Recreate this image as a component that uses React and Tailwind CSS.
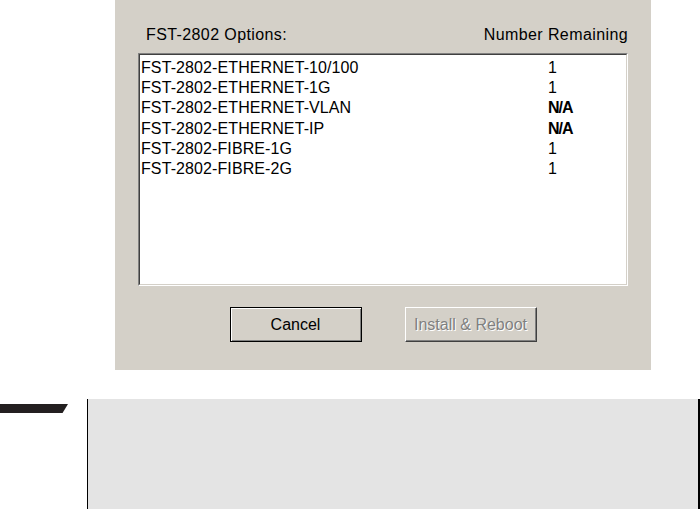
import React from 'react';

const options = [
  { name: 'FST-2802-ETHERNET-10/100', left: '1' },
  { name: 'FST-2802-ETHERNET-1G', left: '1' },
  { name: 'FST-2802-ETHERNET-VLAN', left: 'N/A' },
  { name: 'FST-2802-ETHERNET-IP', left: 'N/A' },
  { name: 'FST-2802-FIBRE-1G', left: '1' },
  { name: 'FST-2802-FIBRE-2G', left: '1' },
];

const App = () => {
  return (
    <div className="w-[700px] h-[509px] bg-white overflow-hidden font-['Liberation_Sans',Arial,sans-serif] text-black">
      {/* dialog panel */}
      <div className="ml-[115px] w-[536px] h-[370px] bg-[#d4d0c8] pt-[25px] pl-[23px]">
        <div className="w-[490px] h-[20px] flex items-center justify-between text-[16px] tracking-[0.4px] leading-none">
          <span className="pl-[8px]">FST-2802 Options:</span>
          <span>Number Remaining</span>
        </div>

        <div className="mt-[8px] w-[490px] h-[233px] border border-t-[#808080] border-l-[#808080] border-b-white border-r-white">
          <div className="h-full bg-white border border-t-[#404040] border-l-[#404040] border-b-[#d4d0c8] border-r-[#d4d0c8] pt-[3px] pl-[1px]">
            {options.map((o) => (
              <div key={o.name} className="flex h-[20.2px] items-center text-[16px] tracking-[0.1px] leading-none">
                <span className="w-[407px] shrink-0">{o.name}</span>
                <span className={o.left === 'N/A' ? 'font-bold tracking-[-1px]' : ''}>{o.left}</span>
              </div>
            ))}
          </div>
        </div>

        <div className="mt-[21px] w-[490px] flex justify-center gap-[43px]">
          <button className="w-[132px] h-[35px] border border-black bg-[#d4d0c8] shadow-[inset_1px_1px_0_#fff,inset_-1px_-1px_0_#808080] text-[16px] font-normal">
            Cancel
          </button>
          <button
            disabled
            className="w-[132px] h-[35px] border border-t-white border-l-white border-r-[#404040] border-b-[#404040] bg-[#d4d0c8] shadow-[inset_-1px_-1px_0_#808080] text-[16px] font-normal text-[#808080] [text-shadow:1px_1px_0_#fff]"
          >
            Install &amp; Reboot
          </button>
        </div>
      </div>

      {/* note box below */}
      <div className="mt-[29px] flex h-[110px]">
        <div className="w-[87px] shrink-0 pt-[5px]">
          <div className="w-[68px] h-[9px] bg-[#231f20] [clip-path:polygon(0_0,100%_0,92%_100%,0_100%)]"></div>
        </div>
        <div className="w-[1px] bg-black"></div>
        <div className="w-[610px] bg-[#e4e4e4]"></div>
        <div className="w-[2px] bg-black"></div>
      </div>
    </div>
  );
};

export default App;
